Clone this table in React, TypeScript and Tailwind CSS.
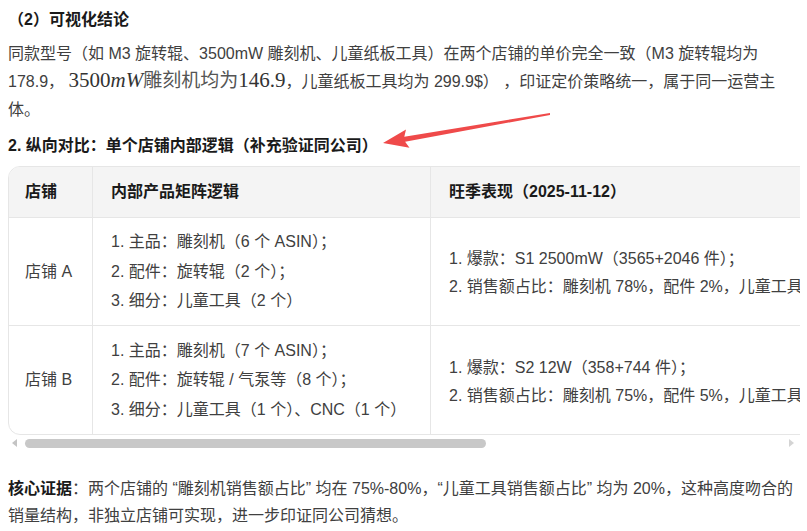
const font = "font-['Liberation_Sans','Noto_Sans_CJK_SC',sans-serif]"

const rows = [
  {
    shop: "店铺 A",
    matrix: ["1. 主品：雕刻机（6 个 ASIN）；", "2. 配件：旋转辊（2 个）；", "3. 细分：儿童工具（2 个）"],
    peak: ["1. 爆款：S1 2500mW（3565+2046 件）；", "2. 销售额占比：雕刻机 78%，配件 2%，儿童工具 20%"],
  },
  {
    shop: "店铺 B",
    matrix: ["1. 主品：雕刻机（7 个 ASIN）；", "2. 配件：旋转辊 / 气泵等（8 个）；", "3. 细分：儿童工具（1 个）、CNC（1 个）"],
    peak: ["1. 爆款：S2 12W（358+744 件）；", "2. 销售额占比：雕刻机 75%，配件 5%，儿童工具 20%"],
  },
]

function Arrow() {
  return (
    <svg className="absolute left-0 top-0 pointer-events-none" width="807" height="531">
      <polygon
        points="383,143 406,129.5 404.3,136.7 550,113 550,115 405.1,141.7 409.5,147.8"
        fill="#ef4a4a"
      />
    </svg>
  )
}

export default function App() {
  return (
    <div className={`relative w-[807px] h-[531px] overflow-hidden bg-white pl-2 pr-[7px] pt-[6px] text-[16px] text-[#404040] ${font}`}>
      <h3 className="leading-[28px] font-bold text-[#1a1a1a]">（2）可视化结论</h3>
      <p className="mt-[6px] leading-[28px]">
        同款型号（如 M3 旋转辊、3500mW 雕刻机、儿童纸板工具）在两个店铺的单价完全一致（M3 旋转辊均为 178.9，{" "}
        <span className="font-['Liberation_Serif',serif] text-[21px] leading-[20px] text-[#333]">
          3500<i>mW</i>
          <span className="font-['Noto_Sans_CJK_SC',sans-serif] text-[19px] text-[#555]">雕刻机均为</span>146.9
        </span>
        ，儿童纸板工具均为 299.9$） ，印证定价策略统一，属于同一运营主体。
      </p>
      <h3 className="mt-[8px] leading-[28px] font-bold text-[#1a1a1a]">2. 纵向对比：单个店铺内部逻辑（补充验证同公司）</h3>

      <div className="mt-[6px] overflow-hidden">
        <div className="w-[1330px] rounded-xl border border-[#e6e6e6] overflow-hidden">
          <div className="flex h-[51px] bg-[#f4f4f4] font-bold text-[#1a1a1a] border-b border-[#e6e6e6]">
            <div className="w-[84px] flex items-center pl-[16px] border-r border-[#e6e6e6]">店铺</div>
            <div className="w-[338px] flex items-center pl-[18px] border-r border-[#e6e6e6]">内部产品矩阵逻辑</div>
            <div className="flex-1 flex items-center pl-[18px]">旺季表现（2025-11-12）</div>
          </div>
          {rows.map((r, i) => (
            <div key={r.shop} className={`flex h-[108px] ${i === 0 ? "border-b border-[#e6e6e6]" : ""}`}>
              <div className="w-[84px] flex items-center pl-[16px] border-r border-[#e6e6e6]">{r.shop}</div>
              <div className="w-[338px] flex flex-col justify-center pl-[18px] leading-[29.5px] whitespace-nowrap border-r border-[#e6e6e6]">
                {r.matrix.map((m) => (
                  <div key={m}>{m}</div>
                ))}
              </div>
              <div className="flex-1 flex flex-col justify-center pl-[18px] pt-[3px] leading-[28px] whitespace-nowrap">
                {r.peak.map((m) => (
                  <div key={m}>{m}</div>
                ))}
              </div>
            </div>
          ))}
        </div>
      </div>

      <div className="flex items-center h-[12px] mt-[2px]">
        <div className="w-0 h-0 ml-[4px] border-y-[4px] border-y-transparent border-r-[5px] border-r-[#c4c4c4]" />
        <div className="flex-1 relative h-[9px] mx-[8px]">
          <div className="absolute left-0 top-0 h-[9px] w-[461px] rounded-full bg-[#c8c8c8]" />
        </div>
        <div className="w-0 h-0 mr-[6px] border-y-[4px] border-y-transparent border-l-[5px] border-l-[#d4d4d4]" />
      </div>

      <p className="mt-[26px] leading-[27px]">
        <b className="text-[#1a1a1a]">核心证据</b>：两个店铺的 “雕刻机销售额占比” 均在 75%-80%，“儿童工具销售额占比” 均为 20%，这种高度吻合的销量结构，非独立店铺可实现，进一步印证同公司猜想。
      </p>
      <Arrow />
    </div>
  )
}
